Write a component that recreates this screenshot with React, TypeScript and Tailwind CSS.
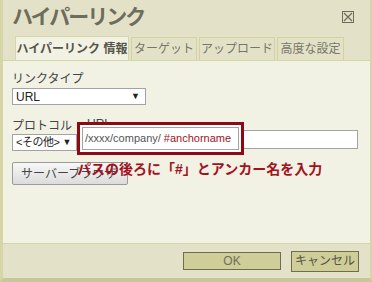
import React from "react";

const jp = "font-['Liberation_Sans','Noto_Sans_CJK_JP',sans-serif]";

const tabs = [
  { label: "ハイパーリンク 情報", active: true, w: "w-[114px]" },
  { label: "ターゲット", active: false, w: "w-[66px]" },
  { label: "アップロード", active: false, w: "w-[76px]" },
  { label: "高度な設定", active: false, w: "w-[67px]" },
];

const Select = ({ value, w, size }: { value: string; w: string; size: string }) => (
  <div
    className={`${w} h-[17px] bg-white border border-[#a3a3a3] flex items-center justify-between pl-[3px] pr-[5px] ${size} text-[#222] leading-none whitespace-nowrap`}
  >
    <span>{value}</span>
    <span className="text-[9px]">▼</span>
  </div>
);

export default function App() {
  return (
    <div
      className={`${jp} w-[372px] h-[282px] bg-[#e3e2c8] border-l-[3px] border-r-[2px] border-b-[4px] border-l-[#d6d5a6] border-r-[#d6d5a6] border-b-[#c8c79a] flex flex-col overflow-hidden`}
    >
      {/* header */}
      <div className="h-[60px] flex flex-col">
        <div className="flex items-center justify-between pl-[9px] pr-[16px] pt-[3px]">
          <h1 className="text-[21px] font-bold text-[#6e6d5c] tracking-[-2px] leading-[28px]">
            ハイパーリンク
          </h1>
          <div className="w-[12px] h-[12px] border border-[#6e6d5c] flex items-center justify-center">
            <svg width="10" height="10" viewBox="0 0 10 10">
              <path d="M1 1L9 9M9 1L1 9" stroke="#6e6d5c" strokeWidth="1.2" />
            </svg>
          </div>
        </div>
        <div className="flex items-end gap-[2px] pl-[12px] mt-auto">
          {tabs.map((t) => (
            <div
              key={t.label}
              className={`${t.w} flex items-center justify-center text-[12px] border border-b-0 ${
                t.active
                  ? "h-[25px] bg-[#f1f1e4] border-[#d6d5a6] text-[#555548] font-bold -mb-px"
                  : "h-[23px] bg-[#e3e2c6] border-[#d3d2a2] text-[#77766a]"
              }`}
            >
              {t.label}
            </div>
          ))}
        </div>
      </div>

      {/* body */}
      <div className="flex-1 bg-[#f1f1e4] border-t border-[#d6d5a6] pl-[9px] pt-[10px] relative">
        <div className="text-[12px] text-[#444] leading-[16px]">リンクタイプ</div>
        <div className="mt-px">
          <Select value="URL" w="w-[134px]" size="text-[12px]" />
        </div>

        <div className="flex mt-[13px] gap-[4px]">
          <div className="flex flex-col">
            <div className="text-[12px] text-[#444] leading-[16px]">プロトコル</div>
            <div className="mt-[0px]">
              <Select value="<その他>" w="w-[65px]" size="text-[11px] tracking-[-0.5px]" />
            </div>
          </div>
          <div className="flex flex-col">
            <div className="text-[12px] text-[#444] leading-[12px] pl-[6px]">URL</div>
            <div className="w-[277px] h-[19px] bg-white border border-[#a3a3a3]" />
          </div>
        </div>

        <div className="mt-[11px] w-[116px] h-[23px] border border-[#9a9a9a] rounded-[2px] bg-gradient-to-b from-[#f7f7f7] to-[#dcdcdc] flex items-center pl-[8px] text-[12px] text-[#444]">
          サーバーブラウザ
        </div>

        {/* callout */}
        <div className="absolute left-[74px] top-[61px] w-[167px] h-[33px] border-[3px] border-[#8e0a12] bg-white p-[2px]">
          <div className="h-full border border-[#a3a3a3] bg-white flex items-center pl-[2px] text-[11px] text-[#555] whitespace-nowrap">
            /xxxx/company/&nbsp;<span className="text-[#a0141e]">#anchorname</span>
          </div>
        </div>
        <div className="absolute left-[74px] top-[100px] text-[14px] font-bold text-[#a3121c] leading-[16px] whitespace-nowrap">
          パスの後ろに「#」とアンカー名を入力
        </div>
      </div>

      {/* footer */}
      <div className="h-[35px] flex items-center justify-end gap-[10px] pr-[11px] border-t border-[#d6d5a6]">
        <div className="w-[98px] h-[18px] bg-[#cfcd98] border border-[#6e6d4e] flex items-center justify-center text-[12px] text-[#6e6d5c]">
          OK
        </div>
        <div className="w-[68px] h-[21px] bg-[#cfcd98] border border-[#6e6d4e] flex items-center justify-center text-[12px] text-[#55544a]">
          キャンセル
        </div>
      </div>
    </div>
  );
}
